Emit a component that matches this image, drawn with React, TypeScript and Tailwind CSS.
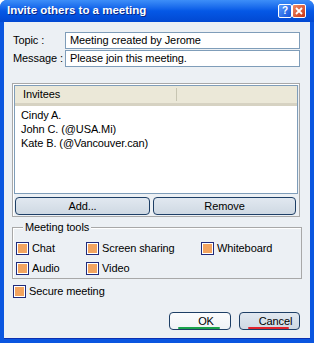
import React from "react";

// Windows XP style "Invite others to a meeting" dialog

const invitees = ["Cindy A.", "John C. (@USA.Mi)", "Kate B. (@Vancouver.can)"];

function CheckBox({ label, className = "" }: { label: string; className?: string }) {
  return (
    <div className={`flex items-center ${className}`}>
      <span className="flex h-[13px] w-[13px] shrink-0 items-center justify-center border border-[#1f2a7a] bg-white">
        <span className="h-[9px] w-[9px] bg-[#f2a35e]" />
      </span>
      <span className="ml-[3px] leading-[13px]">{label}</span>
    </div>
  );
}

function XpButton({
  children,
  className = "",
  underline,
}: {
  children: React.ReactNode;
  className?: string;
  underline?: string;
}) {
  return (
    <button
      type="button"
      className={`relative flex h-[18px] items-center justify-center rounded-[4px] border border-[#1e3f66] leading-none ${className}`}
    >
      {children}
      {underline && (
        <span className={`absolute bottom-[0px] left-[8px] right-[10px] h-[2px] rounded-full ${underline}`} />
      )}
    </button>
  );
}

export default function App() {
  return (
    <div
      className="flex h-[343px] w-[314px] flex-col rounded-t-[7px] bg-[#0a56e0] text-[11px] tracking-[-0.1px] text-black"
      style={{ fontFamily: '"Liberation Sans", Arial, sans-serif' }}
    >
      {/* Title bar */}
      <div className="flex h-[22px] shrink-0 items-center rounded-t-[7px] bg-gradient-to-b from-[#3d8ef8] via-[#0558e6] to-[#0248d2] pl-[7px] pr-[8px]">
        <span className="text-[11.5px] font-bold tracking-normal text-white [text-shadow:1px_1px_0_#0a2a8a]">
          Invite others to a meeting
        </span>
        <div className="ml-auto flex">
          <span className="flex h-[14px] w-[14px] items-center justify-center rounded-[2px] border border-white bg-gradient-to-br from-[#5a9cff] to-[#1450d8] text-[10px] font-bold leading-none text-white">
            ?
          </span>
          <span className="flex h-[14px] w-[14px] items-center justify-center rounded-[2px] border border-white bg-gradient-to-br from-[#f08a66] to-[#c8300e]">
            <svg width="8" height="8" viewBox="0 0 8 8">
              <path d="M1 1 L7 7 M7 1 L1 7" stroke="white" strokeWidth="1.8" />
            </svg>
          </span>
        </div>
      </div>

      {/* Body */}
      <div className="mx-[4px] mb-[4px] flex flex-1 flex-col border-b border-[#0b2fb0] bg-[#ecf0f4] pl-[9px] pr-[10px] pt-[10px]">
        <div className="flex h-[17px] items-center">
          <span className="w-[52px]">Topic :</span>
          <div className="flex h-[17px] flex-1 items-center border border-[#7f9db9] bg-white px-[4px]">
            Meeting created by Jerome
          </div>
        </div>
        <div className="mt-[1px] flex h-[17px] items-center">
          <span className="w-[52px]">Message :</span>
          <div className="flex h-[17px] flex-1 items-center border border-[#7f9db9] bg-white px-[4px]">
            Please join this meeting.
          </div>
        </div>

        {/* Invitees frame */}
        <div className="-ml-[1px] mt-[16px] flex h-[134px] w-[288px] flex-col border border-[#a8a8a8] p-[1px] shadow-[inset_1px_1px_0_#ffffff]">
          <div className="flex h-[109px] flex-col border border-[#7f9db9] bg-white">
            <div className="flex h-[20px] shrink-0 items-center border-b-[3px] border-[#d6d2c2] bg-[#ebe8d8]">
              <span className="w-[162px] border-r border-[#c7c5b2] pl-[8px] leading-[13px]">Invitees</span>
            </div>
            <div className="flex flex-col pl-[6px] pt-[2px] leading-[14px]">
              {invitees.map((name) => (
                <span key={name}>{name}</span>
              ))}
            </div>
          </div>
          <div className="mt-[3px] flex gap-[3px] pl-[1px]">
            <XpButton className="w-[135px] bg-gradient-to-b from-[#e1e8f0] to-[#cfd9e3]">Add...</XpButton>
            <XpButton className="w-[143px] bg-gradient-to-b from-[#e1e8f0] to-[#cfd9e3]">Remove</XpButton>
          </div>
        </div>

        {/* Meeting tools */}
        <fieldset className="-ml-[1px] mt-[4px] w-[290px] border border-[#a8a8a8] px-[3px] pb-[3px] shadow-[inset_1px_1px_0_#ffffff]">
          <legend className="ml-[7px] bg-[#ecf0f4] px-[2px] leading-[13px]">Meeting tools</legend>
          <div className="mt-[8px] flex">
            <CheckBox label="Chat" className="w-[70px]" />
            <CheckBox label="Screen sharing" className="w-[115px]" />
            <CheckBox label="Whiteboard" />
          </div>
          <div className="mt-[7px] flex">
            <CheckBox label="Audio" className="w-[70px]" />
            <CheckBox label="Video" />
          </div>
        </fieldset>

        <CheckBox label="Secure meeting" className="mt-[6px]" />

        <div className="mt-[14px] flex justify-end gap-[8px]">
          <XpButton className="w-[62px] bg-gradient-to-b from-[#fbfcfd] to-[#eef2f5] pl-[12px]" underline="bg-[#19a34a]">
            OK
          </XpButton>
          <XpButton className="w-[61px] bg-gradient-to-b from-[#e1e8f0] to-[#cfd9e3] pl-[12px]" underline="bg-[#e3222c]">
            Cancel
          </XpButton>
        </div>
      </div>
    </div>
  );
}
